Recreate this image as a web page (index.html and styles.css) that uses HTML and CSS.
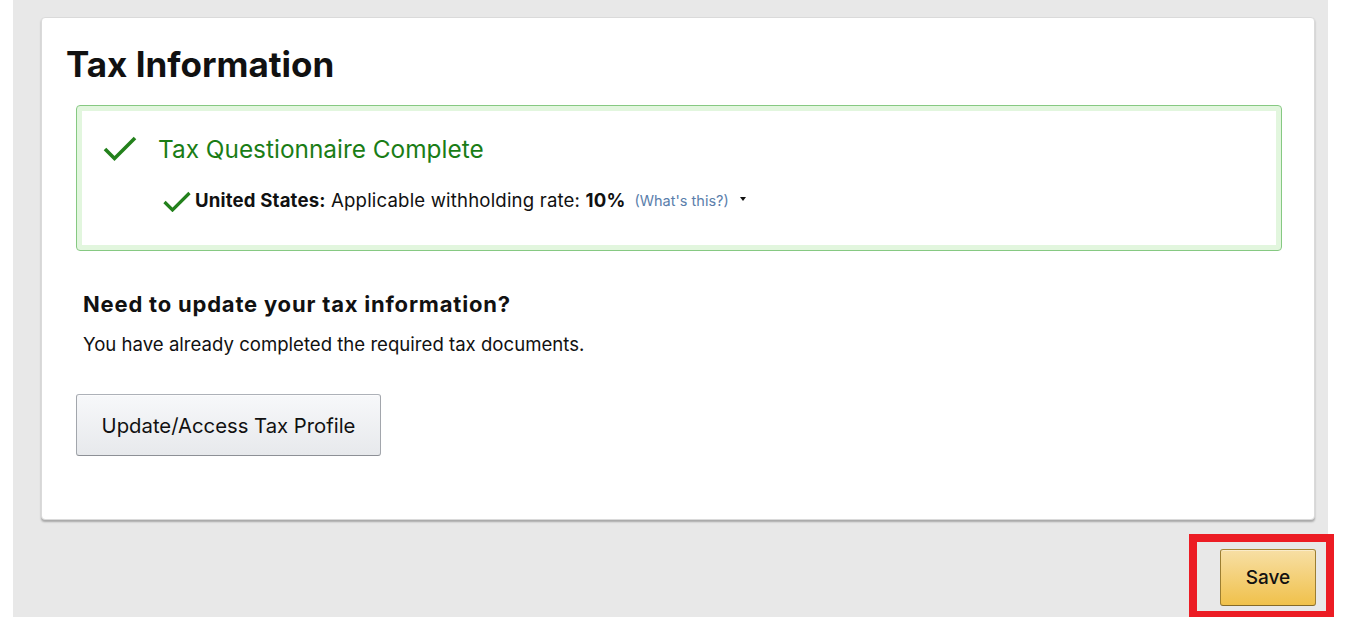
FILE: index.html
```html
<!DOCTYPE html>
<html lang="en">
<head>
<meta charset="utf-8">
<title>Tax Information</title>
<link rel="stylesheet" href="styles.css">
</head>
<body>
<div class="page">
  <section class="card">
    <h1 class="card-title">Tax Information</h1>

    <div class="success-box">
      <div class="success-head">
        <svg class="check-lg" width="34" height="26" viewBox="0 0 34 26" aria-hidden="true">
          <polyline points="2,13 11.5,22.5 32,2" fill="none" stroke="#23811c" stroke-width="3.6" stroke-linecap="butt" stroke-linejoin="miter"/>
        </svg>
        <span class="success-title">Tax Questionnaire Complete</span>
      </div>
      <div class="success-row">
        <svg class="check-sm" width="28" height="21" viewBox="0 0 28 21" aria-hidden="true">
          <polyline points="1.5,11 9.5,19 26.5,2" fill="none" stroke="#23811c" stroke-width="3.2" stroke-linecap="butt" stroke-linejoin="miter"/>
        </svg>
        <span class="row-text"><b>United States:</b> Applicable withholding rate: <b>10%</b></span>
        <a class="whats-this" href="#">(What's this?)</a>
        <span class="caret" aria-hidden="true"></span>
      </div>
    </div>

    <div class="update-section">
      <h2 class="update-title">Need to update your tax information?</h2>
      <p class="update-text">You have already completed the required tax documents.</p>
      <button class="btn-secondary" type="button">Update/Access Tax Profile</button>
    </div>
  </section>

  <div class="footer-bar">
    <button class="btn-primary" type="button">Save</button>
  </div>

  <div class="annotation" aria-hidden="true"></div>
</div>
</body>
</html>
```
FILE: styles.css
```css
* { box-sizing: border-box; }

html, body {
  margin: 0;
  padding: 0;
  background: #ffffff;
}

body {
  font-family: Inter, "Noto Sans", sans-serif;
  color: #111111;
}

.page {
  position: relative;
  margin-left: 13px;
  width: 1315px;
  height: 617px;
  background: #e8e8e8;
  padding-top: 17px;
  display: flex;
  flex-direction: column;
}

.card {
  margin: 0 13px 0 28px;
  height: 503px;
  background: #ffffff;
  border: 1px solid #dadada;
  border-radius: 4px;
  box-shadow: 0 2px 2px rgba(0, 0, 0, 0.28);
  padding: 26px 25px 0 24px;
}

.card-title {
  margin: 0;
  font-size: 35px;
  line-height: 40px;
  font-weight: 700;
  color: #111111;
}

.success-box {
  margin: 21px 7px 0 10px;
  height: 146px;
  border: 1px solid #86c982;
  border-radius: 4px;
  box-shadow: inset 0 0 0 5px #e2f6de;
  padding: 28px 0 0 26px;
}

.success-head {
  display: flex;
  align-items: center;
  height: 30px;
}

.check-lg {
  display: block;
  flex: none;
}

.success-title {
  margin-left: 21px;
  font-size: 24.4px;
  line-height: 30px;
  color: #1a7d16;
}

.success-row {
  display: flex;
  align-items: center;
  margin-top: 24px;
  margin-left: 60px;
  height: 24px;
}

.check-sm {
  display: block;
  flex: none;
  margin-top: 3px;
}

.row-text {
  margin-left: 4px;
  font-size: 18.6px;
  line-height: 24px;
  letter-spacing: 0.17px;
  color: #111111;
  white-space: nowrap;
}

.row-text b {
  font-weight: 700;
}

.whats-this {
  margin-left: 9px;
  font-size: 14.5px;
  line-height: 24px;
  color: #5a7eab;
  text-decoration: none;
  white-space: nowrap;
  position: relative;
  top: 1px;
}

.caret {
  margin-left: 11px;
  width: 0;
  height: 0;
  border-left: 3.5px solid transparent;
  border-right: 3.5px solid transparent;
  border-top: 4px solid #111111;
  position: relative;
  top: -1px;
}

.update-section {
  margin: 39px 0 0 10px;
}

.update-title {
  margin: 0;
  padding-left: 7px;
  font-size: 22px;
  line-height: 28px;
  font-weight: 700;
  letter-spacing: 0.8px;
  color: #111111;
}

.update-text {
  margin: 14px 0 0 0;
  padding-left: 7px;
  font-size: 18.6px;
  line-height: 24px;
  color: #111111;
}

.btn-secondary {
  margin-top: 38px;
  display: flex;
  align-items: center;
  justify-content: center;
  width: 305px;
  height: 62px;
  padding: 0;
  font-family: Inter, "Noto Sans", sans-serif;
  font-size: 20.3px;
  color: #111111;
  background: linear-gradient(to bottom, #f7f8fa, #e7e9ec);
  border: 1px solid;
  border-color: #adb1b8 #a2a6ac #8d9096;
  border-radius: 3px;
  box-shadow: inset 0 1px 0 rgba(255, 255, 255, 0.6);
}

.footer-bar {
  display: flex;
  justify-content: flex-end;
  margin-top: 29px;
  padding-right: 12px;
}

.btn-primary {
  width: 96px;
  height: 57px;
  padding: 0;
  font-family: Inter, "Noto Sans", sans-serif;
  font-size: 19px;
  font-weight: 500;
  color: #111111;
  background: linear-gradient(to bottom, #f7dfa5, #f0c14b);
  border: 1px solid;
  border-color: #a88734 #9c7e31 #846a29;
  border-radius: 3px;
  box-shadow: inset 0 1px 0 rgba(255, 255, 255, 0.4);
}

.annotation {
  position: absolute;
  left: 1176px;
  top: 534px;
  width: 145px;
  height: 85px;
  border: 8px solid #ec1c24;
}
```
